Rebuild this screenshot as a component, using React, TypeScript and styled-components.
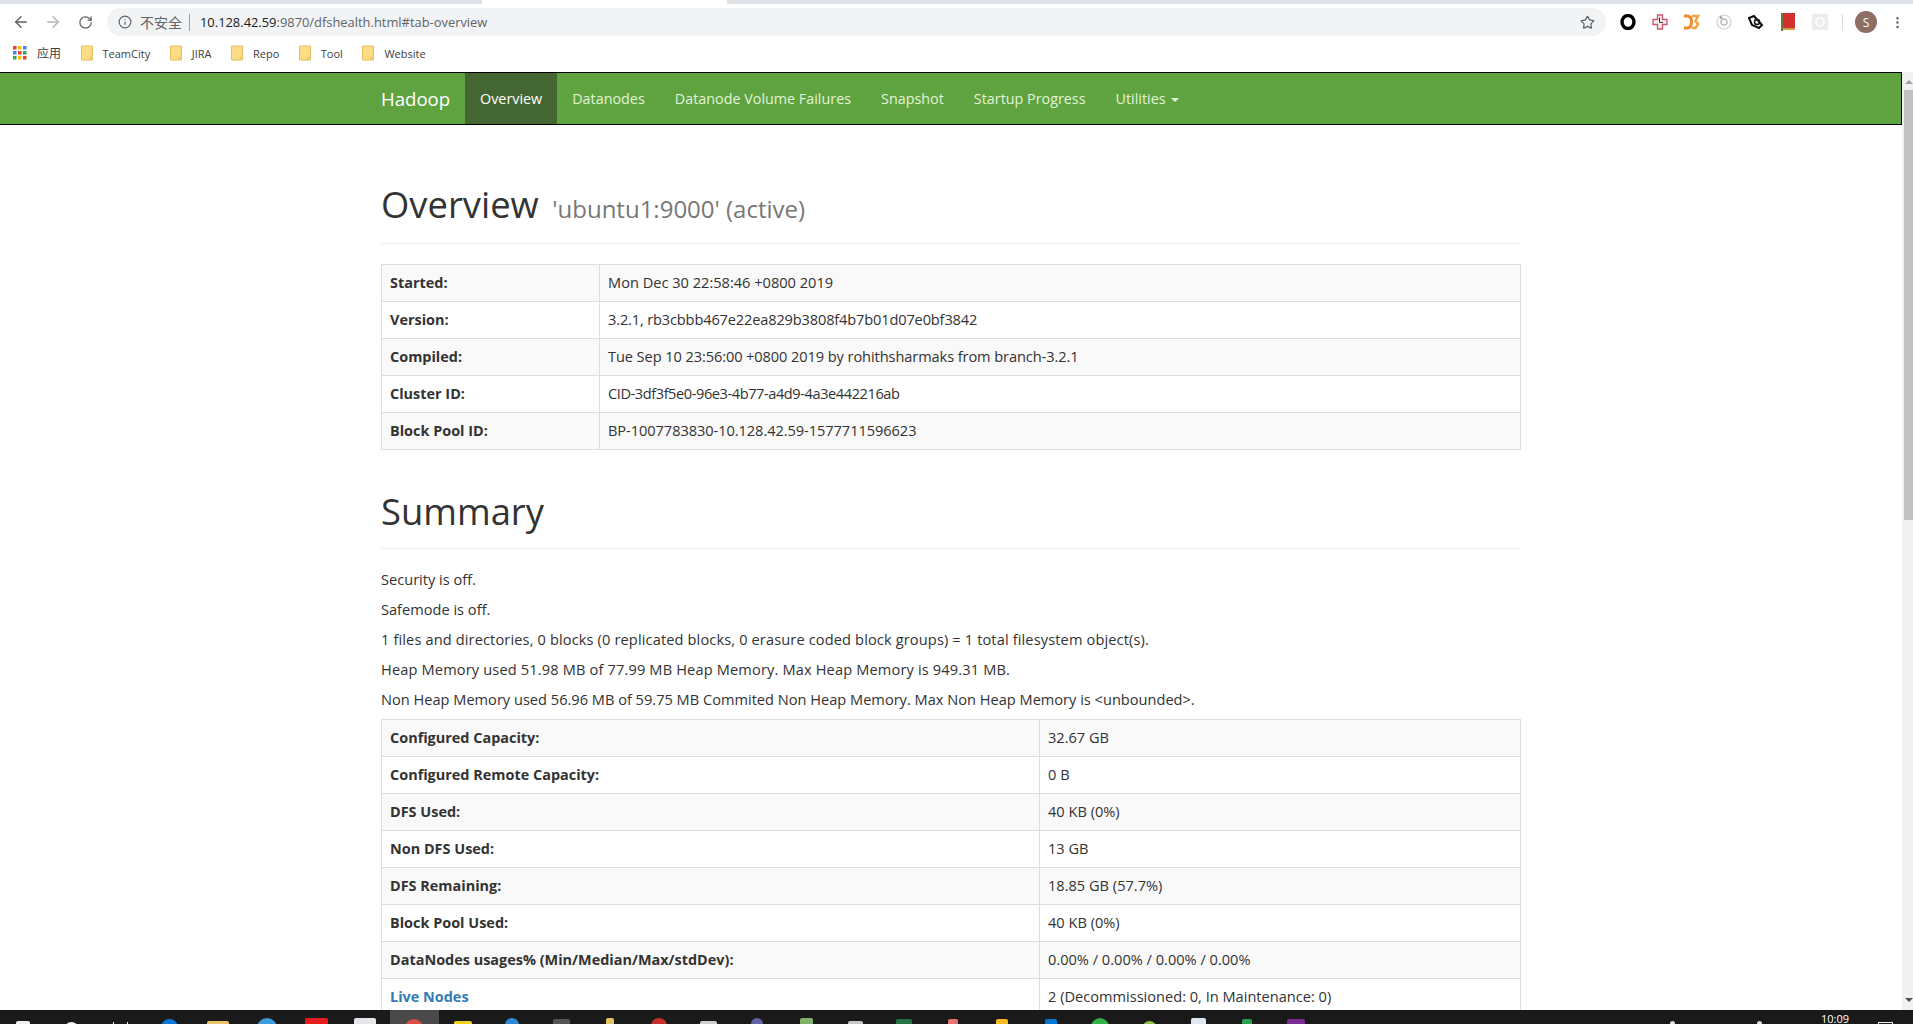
import React from 'react';
import styled, { createGlobalStyle } from 'styled-components';
import { ArrowLeft, ArrowRight, RotateCw, Info, Star, MoreVertical } from 'lucide-react';

const GlobalStyle = createGlobalStyle`
  html, body { margin: 0; padding: 0; height: 100%; overflow: hidden; background: #fff; }
  body { font-family: "Open Sans", "Noto Sans CJK SC", sans-serif; color: #333; }
  * { box-sizing: border-box; }
`;

const Screen = styled.div`
  width: 1913px;
  height: 1024px;
  display: flex;
  flex-direction: column;
  overflow: hidden;
`;

const TabStrip = styled.div`
  height: 4px;
  flex: none;
  display: flex;
`;

const TabGap = styled.span<{ $w?: number }>`
  flex: ${p => (p.$w ? 'none' : '1')};
  width: ${p => (p.$w ? `${p.$w}px` : 'auto')};
  background: #dee1e6;
`;

const ActiveTab = styled.span`
  width: 245px;
  flex: none;
  background: #fff;
`;

const Toolbar = styled.div`
  height: 36px;
  flex: none;
  display: flex;
  align-items: center;
  padding: 0 8px 0 5px;
  background: #fff;
`;

const NavButton = styled.span<{ $dim?: boolean }>`
  width: 32px;
  display: flex;
  justify-content: center;
  color: ${p => (p.$dim ? '#b4b6b9' : '#5f6368')};
`;

const Omnibox = styled.div`
  flex: 1;
  height: 28px;
  margin-left: 6px;
  padding: 0 11px 0 11px;
  border-radius: 14px;
  background: #f1f3f4;
  display: flex;
  align-items: center;
  font-size: 12.9px;
  color: #5f6368;
`;

const Secure = styled.span`
  margin-left: 8px;
  padding-right: 7px;
  border-right: 1px solid #9aa0a6;
  line-height: 17px;
  font-size: 14px;
`;

const Host = styled.span`
  margin-left: 10px;
  color: #202124;
`;

const HostRest = styled.span`
  color: #5f6368;
`;

const Grow = styled.span`
  flex: 1;
`;

const Extensions = styled.div`
  display: flex;
  align-items: center;
  gap: 16px;
  margin-left: 14px;
  padding-right: 14px;
  margin-right: 12px;
  border-right: 1px solid #dadce0;
  height: 16px;
`;

const Avatar = styled.span`
  width: 22px;
  height: 22px;
  border-radius: 50%;
  background: #8d6e63;
  color: #fff;
  font-size: 12px;
  display: flex;
  align-items: center;
  justify-content: center;
  margin-right: 13px;
`;

const Bookmarks = styled.div`
  height: 32px;
  flex: none;
  display: flex;
  align-items: center;
  padding: 0 0 6px 13px;
  font-size: 11px;
  color: #3c4043;
`;

const Bookmark = styled.span`
  display: flex;
  align-items: center;
  gap: 10px;
  margin-right: 19.5px;
`;

const AppsLabel = styled.span`
  font-size: 12px;
`;

const Frame = styled.div`
  flex: 1;
  display: flex;
  min-height: 0;
`;

const Page = styled.div`
  flex: 1;
  min-width: 0;
  overflow: hidden;
`;

const Navbar = styled.nav`
  height: 53px;
  background: #5fa341;
  border: 1px solid #000;
  border-width: 1px 1px 1px 0;
  padding-left: 366px;
  display: flex;
  align-items: stretch;
`;

const Brand = styled.a`
  width: 99px;
  padding-left: 15px;
  color: #fff;
  font-size: 18.6px;
  line-height: 51px;
`;

const NavItem = styled.a<{ $active?: boolean }>`
  padding: 0 15px;
  font-size: 14.35px;
  line-height: 51px;
  color: ${p => (p.$active ? '#fff' : '#e2f3d6')};
  background: ${p => (p.$active ? '#446633' : 'transparent')};
`;

const Caret = styled.span`
  display: inline-block;
  margin-left: 5px;
  vertical-align: middle;
  border-top: 4px solid #e2f3d6;
  border-left: 4px solid transparent;
  border-right: 4px solid transparent;
`;

const Container = styled.main`
  width: 1170px;
  margin-left: 366px;
  padding: 0 15px;
`;

const PageHeader = styled.div<{ $top: number; $pad?: number }>`
  margin-top: ${p => p.$top}px;
  padding-bottom: ${p => p.$pad ?? 9}px;
  border-bottom: 1px solid #eee;
  margin-bottom: 20px;
`;

const Title = styled.h1`
  margin: 0;
  font-size: 36.4px;
  font-weight: 400;
  line-height: 50px;
  color: #333;
`;

const Small = styled.small`
  font-size: 24px;
  color: #777;
  font-weight: 400;
  margin-left: 4px;
`;

const Table = styled.table`
  width: 100%;
  border-collapse: collapse;
  margin-bottom: 20px;
  font-size: 14.6px;
  table-layout: fixed;
  tr:nth-child(odd) { background: #f9f9f9; }
  th, td {
    border: 1px solid #ddd;
    padding: 7px 8px 8px;
    height: 37px;
    line-height: 20px;
    text-align: left;
    vertical-align: baseline;
  }
  th { font-weight: 700; font-size: 14.45px; }
`;

const Value = styled.td<{ $track?: number }>`
  letter-spacing: ${p => p.$track ?? 0}px;
`;

const Line = styled.p<{ $track?: number }>`
  margin: 0 0 10px;
  font-size: 14.6px;
  line-height: 20px;
  letter-spacing: ${p => p.$track ?? 0}px;
`;

const NodeLink = styled.a`
  color: #337ab7;
`;

const Scrollbar = styled.div`
  width: 11px;
  flex: none;
  background: #f1f1f1;
  position: relative;
`;

const Thumb = styled.div`
  position: absolute;
  top: 18px;
  left: 2px;
  right: 0;
  height: 430px;
  background: #c1c1c1;
`;

const ArrowUp = styled.span`
  position: absolute;
  top: 8px;
  left: 3px;
  border-bottom: 4px solid #a3a3a3;
  border-left: 4px solid transparent;
  border-right: 4px solid transparent;
`;

const ArrowDown = styled.span`
  position: absolute;
  bottom: 8px;
  left: 3px;
  border-top: 4px solid #505050;
  border-left: 4px solid transparent;
  border-right: 4px solid transparent;
`;

const Taskbar = styled.div`
  height: 14px;
  flex: none;
  background: #1b1a1a;
  overflow: hidden;
  display: flex;
  position: relative;
`;

const TaskSlot = styled.div<{ $active?: boolean }>`
  width: 49px;
  flex: none;
  height: 14px;
  display: flex;
  justify-content: center;
  background: ${p => (p.$active ? '#4a4a4a' : 'transparent')};
  &:first-child { width: 46.5px; }
`;

const TaskIcon = styled.span<{ $color: string; $w: number; $top: number; $round?: boolean }>`
  width: ${p => p.$w}px;
  height: ${p => p.$w}px;
  margin-top: ${p => p.$top}px;
  flex: none;
  background: ${p => p.$color};
  border-radius: ${p => (p.$round ? '50%' : '2px')};
`;

const TaskView = styled.span`
  width: 15px;
  height: 4px;
  margin-top: 12px;
  border-left: 1px solid #eee;
  border-right: 1px solid #eee;
`;

const Clock = styled.span`
  position: absolute;
  left: 1821px;
  top: 4px;
  color: #fff;
  font-size: 11px;
  line-height: 10px;
`;

const TrayDot = styled.span<{ $x: number }>`
  position: absolute;
  left: ${p => p.$x}px;
  top: 11px;
  width: 5px;
  height: 5px;
  border-radius: 50%;
  background: #ddd;
`;

const ActionCenter = styled.span`
  position: absolute;
  left: 1878px;
  top: 12px;
  width: 15px;
  height: 8px;
  border: 1px solid #eee;
`;

// label, value, letter-spacing needed to match the reference's width
const overview: [string, string, number][] = [
  ['Started:', 'Mon Dec 30 22:58:46 +0800 2019', 0],
  ['Version:', '3.2.1, rb3cbbb467e22ea829b3808f4b7b01d07e0bf3842', -0.15],
  ['Compiled:', 'Tue Sep 10 23:56:00 +0800 2019 by rohithsharmaks from branch-3.2.1', -0.09],
  ['Cluster ID:', 'CID-3df3f5e0-96e3-4b77-a4d9-4a3e442216ab', -0.43],
  ['Block Pool ID:', 'BP-1007783830-10.128.42.59-1577711596623', -0.06],
];

const summary = [
  ['Configured Capacity:', '32.67 GB'],
  ['Configured Remote Capacity:', '0 B'],
  ['DFS Used:', '40 KB (0%)'],
  ['Non DFS Used:', '13 GB'],
  ['DFS Remaining:', '18.85 GB (57.7%)'],
  ['Block Pool Used:', '40 KB (0%)'],
  ['DataNodes usages% (Min/Median/Max/stdDev):', '0.00% / 0.00% / 0.00% / 0.00%'],
];

const notes: [string, number][] = [
  ['Security is off.', 0],
  ['Safemode is off.', 0],
  ['1 files and directories, 0 blocks (0 replicated blocks, 0 erasure coded block groups) = 1 total filesystem object(s).', 0.13],
  ['Heap Memory used 51.98 MB of 77.99 MB Heap Memory. Max Heap Memory is 949.31 MB.', 0.15],
  ['Non Heap Memory used 56.96 MB of 59.75 MB Commited Non Heap Memory. Max Non Heap Memory is <unbounded>.', 0],
];

// colour, width, top offset, round
const taskIcons: [string, number, number, boolean][] = [
  ['#f0f0f0', 14, 11, false],
  ['#f0f0f0', 15, 12, true],
  ['', 0, 0, false],
  ['#0a78d7', 17, 9, true],
  ['#e9c46a', 22, 11, false],
  ['#3f9be0', 20, 8, true],
  ['#e81c1c', 23, 8, false],
  ['#e4e6ea', 22, 8, false],
  ['#db4f45', 18, 9, true],
  ['#f2d21b', 18, 11, false],
  ['#2d89d6', 14, 8, true],
  ['#555555', 17, 9, false],
  ['#e2c35c', 8, 8, false],
  ['#c9302c', 16, 8, true],
  ['#cfcfcf', 17, 11, false],
  ['#6264a7', 12, 8, true],
  ['#7fb36a', 13, 8, false],
  ['#c8c8c8', 15, 11, false],
  ['#217346', 16, 9, false],
  ['#e57373', 10, 9, false],
  ['#f5b921', 12, 9, false],
  ['#0078d4', 12, 9, false],
  ['#2fb344', 18, 8, true],
  ['#8bc34a', 15, 11, true],
  ['#dfe7f5', 15, 8, false],
  ['#2e9e4f', 10, 9, false],
  ['#7b2a90', 18, 9, false],
];

const FolderIcon = () => (
  <svg width="12" height="16" viewBox="0 0 12 16">
    <path d="M.5 1h11v14H.5z" fill="#fddc86" stroke="#e6c060" />
    <path d="M9 15v-2.500h2.500" fill="none" stroke="#e6c060" />
  </svg>
);

const AppsIcon = () => (
  <svg width="14" height="14" viewBox="0 0 14 14">
    {[
      '#ea4335', '#fbbc04', '#4285f4',
      '#4285f4', '#ea4335', '#34a853',
      '#34a853', '#fbbc04', '#ea4335',
    ].map((c, i) => (
      <rect key={i} x={(i % 3) * 5} y={Math.floor(i / 3) * 5} width="3.500" height="3.500" fill={c} />
    ))}
  </svg>
);

const ExtensionIcons = () => (
  <Extensions>
    <svg width="16" height="16" viewBox="0 0 16 16"><ellipse cx="8" cy="8" rx="6" ry="6.500" fill="none" stroke="#000" strokeWidth="3.400" /></svg>
    <svg width="16" height="16" viewBox="0 0 16 16"><path d="M5.500 1h5v4.500H15v5h-4.500V15h-5v-4.500H1v-5h4.500z" fill="#f0f0f2" stroke="#d0556b" strokeWidth="1.300" /><path d="M7.500 3.500v5h3.500" fill="none" stroke="#333" /></svg>
    <svg width="16" height="16" viewBox="0 0 16 16"><path d="M0 2h3c3 0 4.500 2.500 4.500 6S6 14 3 14H0" fill="none" stroke="#f28a30" strokeWidth="3" /><path d="M8 2h6l-2.500 5 2.500 3-2.500 4H8" fill="none" stroke="#f3a444" strokeWidth="2.600" /></svg>
    <svg width="16" height="16" viewBox="0 0 16 16"><circle cx="8" cy="8" r="7" fill="none" stroke="#cfcfcf" strokeWidth="1.200" /><circle cx="8" cy="8" r="3" fill="none" stroke="#bdbdbd" strokeWidth="1.500" /><circle cx="5" cy="3.500" r="1.300" fill="#999" /></svg>
    <svg width="16" height="16" viewBox="0 0 16 16"><path d="M1 4l5-2 8 9-3 3-7-3z" fill="none" stroke="#111" strokeWidth="2" /><circle cx="9" cy="8" r="2.500" fill="none" stroke="#111" strokeWidth="1.500" /></svg>
    <svg width="16" height="18" viewBox="0 0 16 18"><rect x="1" y="0" width="14" height="15" fill="#d32f2f" /><rect x="1" y="0" width="2" height="18" fill="#6d7a3c" /><rect x="3" y="15" width="12" height="2" fill="#c8a24a" /></svg>
    <svg width="16" height="16" viewBox="0 0 16 16"><rect width="16" height="16" fill="#ececec" /><circle cx="8" cy="8" r="4" fill="none" stroke="#fafafa" strokeWidth="2" /></svg>
  </Extensions>
);

export default function App() {
  return (
    <Screen>
      <GlobalStyle />
      <TabStrip>
        <TabGap $w={482} />
        <ActiveTab />
        <TabGap />
      </TabStrip>
      <Toolbar>
        <NavButton><ArrowLeft size={18} /></NavButton>
        <NavButton $dim><ArrowRight size={18} /></NavButton>
        <NavButton><RotateCw size={15} /></NavButton>
        <Omnibox>
          <Info size={14} />
          <Secure>不安全</Secure>
          <Host>10.128.42.59<HostRest>:9870/dfshealth.html#tab-overview</HostRest></Host>
          <Grow />
          <Star size={15} />
        </Omnibox>
        <ExtensionIcons />
        <Avatar>S</Avatar>
        <MoreVertical size={15} color="#5f6368" />
      </Toolbar>
      <Bookmarks>
        <Bookmark><AppsIcon /><AppsLabel>应用</AppsLabel></Bookmark>
        <Bookmark><FolderIcon />TeamCity</Bookmark>
        <Bookmark><FolderIcon />JIRA</Bookmark>
        <Bookmark><FolderIcon />Repo</Bookmark>
        <Bookmark><FolderIcon />Tool</Bookmark>
        <Bookmark><FolderIcon />Website</Bookmark>
      </Bookmarks>
      <Frame>
        <Page>
          <Navbar>
            <Brand>Hadoop</Brand>
            <NavItem $active>Overview</NavItem>
            <NavItem>Datanodes</NavItem>
            <NavItem>Datanode Volume Failures</NavItem>
            <NavItem>Snapshot</NavItem>
            <NavItem>Startup Progress</NavItem>
            <NavItem>Utilities<Caret /></NavItem>
          </Navbar>
          <Container>
            <PageHeader $top={54}>
              <Title>Overview <Small>'ubuntu1:9000' (active)</Small></Title>
            </PageHeader>
            <Table>
              <colgroup><col style={{ width: 218 }} /><col /></colgroup>
              <tbody>
                {overview.map(([k, v, t]) => <tr key={k}><th>{k}</th><Value $track={t}>{v}</Value></tr>)}
              </tbody>
            </Table>
            <PageHeader $top={36} $pad={12}>
              <Title>Summary</Title>
            </PageHeader>
            {notes.map(([n, t]) => <Line key={n} $track={t}>{n}</Line>)}
            <Table>
              <colgroup><col style={{ width: 658 }} /><col /></colgroup>
              <tbody>
                {summary.map(([k, v]) => <tr key={k}><th>{k}</th><td>{v}</td></tr>)}
                <tr><th><NodeLink>Live Nodes</NodeLink></th><td>2 (Decommissioned: 0, In Maintenance: 0)</td></tr>
              </tbody>
            </Table>
          </Container>
        </Page>
        <Scrollbar>
          <ArrowUp />
          <Thumb />
          <ArrowDown />
        </Scrollbar>
      </Frame>
      <Taskbar>
        {taskIcons.map(([c, w, t, r], i) => (
          <TaskSlot key={i} $active={i === 8}>
            {c ? <TaskIcon $color={c} $w={w} $top={t} $round={r} /> : <TaskView />}
          </TaskSlot>
        ))}
        <TrayDot $x={1670} />
        <TrayDot $x={1757} />
        <Clock>10:09</Clock>
        <ActionCenter />
      </Taskbar>
    </Screen>
  );
}
